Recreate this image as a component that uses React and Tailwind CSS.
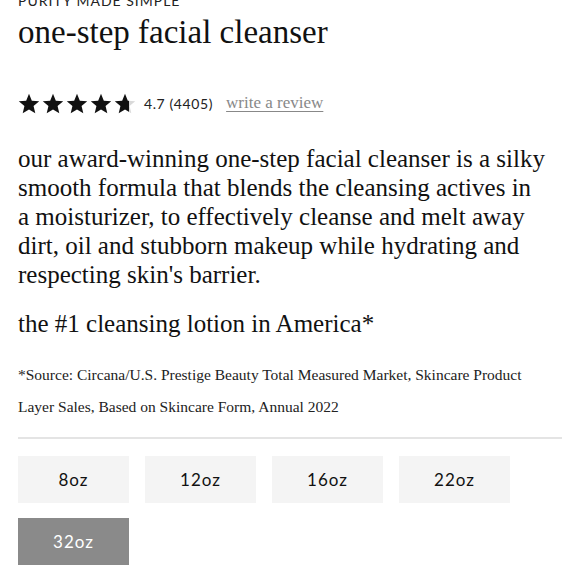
import React, { useState } from 'react';

const Star = ({ fill = 1, id }) => (
  <svg width="22" height="21" viewBox="0 0 24 23">
    <defs>
      <linearGradient id={id}>
        <stop offset={`${fill * 100}%`} stopColor="#111" />
        <stop offset={`${fill * 100}%`} stopColor="#d9d9d9" />
      </linearGradient>
    </defs>
    <path
      d="M12 0.8l3.1 7.6 8.1 0.6-6.2 5.3 1.9 8-6.9-4.3-6.9 4.3 1.9-8L0.8 9l8.1-0.6z"
      fill={`url(#${id})`}
    />
  </svg>
);

const sizes = ['8oz', '12oz', '16oz', '22oz', '32oz'];

export default function App() {
  const [selected, setSelected] = useState('32oz');

  return (
    <div className="w-[580px] h-[580px] overflow-hidden bg-white text-[#111] font-['Liberation_Serif','DejaVu_Serif',serif]">
      <div className="px-[18px] -mt-[8px]">
        {/* Heading */}
        <p className="text-[14px] tracking-[1px] leading-[18px] text-[#222] font-['Lato','Noto_Sans',sans-serif]">
          PURITY MADE SIMPLE
        </p>
        <h1 className="text-[33px] leading-[40px] mt-[2px]">one-step facial cleanser</h1>

        {/* Rating */}
        <div className="flex items-center mt-[39px] h-[24px]">
          <div className="flex gap-[2px]">
            {[1, 1, 1, 1, 0.7].map((f, i) => (
              <Star key={i} fill={f} id={`star-${i}`} />
            ))}
          </div>
          <span className="ml-[8px] text-[14px] tracking-[0.6px] text-[#222] font-['Lato','Noto_Sans',sans-serif]">
            4.7 (4405)
          </span>
          <a href="#" className="ml-[13px] text-[17px] text-[#888] underline underline-offset-[3px]">
            write a review
          </a>
        </div>

        {/* Description */}
        <p className="mt-[29px] text-[25px] leading-[29px]">
          our award-winning one-step facial cleanser is a silky
          <br />
          smooth formula that blends the cleansing actives in
          <br />
          a moisturizer, to effectively cleanse and melt away
          <br />
          dirt, oil and stubborn makeup while hydrating and
          <br />
          respecting skin's barrier.
        </p>

        <p className="mt-[20px] text-[25px] leading-[29px]">the #1 cleansing lotion in America*</p>

        <p className="mt-[21px] text-[15.5px] leading-[32px] text-[#222]">
          *Source: Circana/U.S. Prestige Beauty Total Measured Market, Skincare Product
          <br />
          Layer Sales, Based on Skincare Form, Annual 2022
        </p>

        <div className="mt-[14px] h-[2px] bg-[#e4e4e4] w-[544px]" />

        {/* Sizes */}
        <div className="mt-[17px] flex flex-wrap gap-x-[16px] gap-y-[15px] w-[544px]">
          {sizes.map((s) => (
            <button
              key={s}
              onClick={() => setSelected(s)}
              className={`w-[111px] h-[47px] text-[17px] tracking-[1px] font-['Lato','Noto_Sans',sans-serif] ${
                selected === s ? 'bg-[#8a8a8a] text-white' : 'bg-[#f4f4f4] text-[#111]'
              }`}
            >
              {s}
            </button>
          ))}
        </div>
      </div>
    </div>
  );
}
